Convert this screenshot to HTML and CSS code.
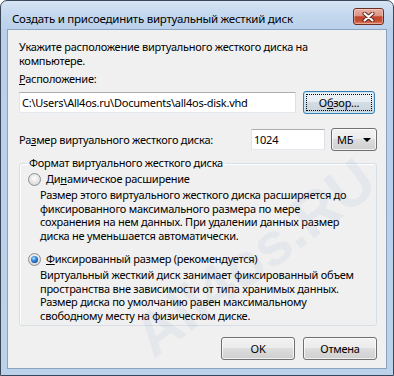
FILE: index.html
```html
<!DOCTYPE html>
<html lang="ru">
<head>
<meta charset="utf-8">
<title>Создать и присоединить виртуальный жесткий диск</title>
<link rel="stylesheet" href="styles.css">
</head>
<body>
<div class="window">
  <div class="titlebar">
    <span class="title">Создать и присоединить виртуальный жесткий диск</span>
    <div class="close">
      <svg width="13" height="10" viewBox="0 0 13 10">
        <path d="M2.5 1.5 L10.5 8.5 M10.5 1.5 L2.5 8.5" stroke="#5a2218" stroke-width="4" stroke-linecap="round" fill="none"/>
        <path d="M2.5 1.5 L10.5 8.5 M10.5 1.5 L2.5 8.5" stroke="#ffffff" stroke-width="2.2" stroke-linecap="round" fill="none"/>
      </svg>
    </div>
  </div>
  <div class="client">
    <p class="intro">Укажите расположение виртуального жесткого диска на<br>компьютере.</p>
    <div class="label"><u>Р</u>асположение:</div>
    <div class="row loc-row">
      <div class="textbox path">C:\Users\All4os.ru\Documents\all4os-disk.vhd</div>
      <div class="btn browse">О<u>б</u>зор...</div>
    </div>
    <div class="row size-row">
      <span class="size-label">Ра<u>з</u>мер виртуального жесткого диска:</span>
      <div class="textbox size">1024</div>
      <div class="btn combo"><span>МБ</span><span class="arrow"></span></div>
    </div>
    <fieldset class="group">
      <legend>Формат виртуального жесткого диска</legend>
      <div class="opt-head"><span class="radio"></span><span>Ди<u>н</u>амическое расширение</span></div>
      <p class="opt-desc">Размер этого виртуального жесткого диска расширяется до<br>фиксированного максимального размера по мере<br>сохранения на нем данных. При удалении данных размер<br>диска не уменьшается автоматически.</p>
      <div class="opt-head second"><span class="radio checked"></span><span><u>Ф</u>иксированный размер (рекомендуется)</span></div>
      <p class="opt-desc">Виртуальный жесткий диск занимает фиксированный объем<br>пространства вне зависимости от типа хранимых данных.<br>Размер диска по умолчанию равен максимальному<br>свободному месту на физическом диске.</p>
    </fieldset>
    <div class="actions">
      <div class="btn">OK</div>
      <div class="btn">Отмена</div>
    </div>
  </div>
  <div class="watermark">All4os.RU</div>
</div>
</body>
</html>
```
FILE: styles.css
```css
html, body {
  margin: 0;
  padding: 0;
  background: #ffffff;
}

.window {
  position: relative;
  width: 394px;
  height: 376px;
  box-sizing: border-box;
  border: 1px solid #3a4759;
  border-radius: 7px 7px 0 0;
  background: linear-gradient(#d6e4f4 0px, #c4d8ee 14px, #bad0ea 29px, #bcd2eb 100%);
  display: flex;
  flex-direction: column;
  overflow: hidden;
  font-family: "Noto Sans", "Open Sans", sans-serif;
  font-size: 11px;
  letter-spacing: -0.25px;
  color: #000;
}

.titlebar {
  flex: none;
  height: 28px;
  display: flex;
  align-items: flex-start;
  justify-content: space-between;
  padding: 0 9px 0 11px;
}

.title {
  margin-top: 10px;
  line-height: 15px;
  font-size: 11.5px;
  white-space: nowrap;
}

.close {
  margin-top: 7px;
  width: 31px;
  height: 17px;
  box-sizing: border-box;
  border: 1px solid #6e2b20;
  border-radius: 3px;
  background: linear-gradient(#ebb0a3 0%, #dc9382 45%, #c3442b 52%, #c64d35 78%, #e0805f 100%);
  box-shadow: inset 0 0 0 1px rgba(255, 255, 255, 0.35);
  display: flex;
  align-items: center;
  justify-content: center;
}

.client {
  flex: 1;
  margin: 0 6px 6px;
  border: 1px solid #8ca3bf;
  background: #f0f0f0;
  padding: 10px 9px 0 11px;
  display: flex;
  flex-direction: column;
}

.intro {
  margin: 0;
  line-height: 14px;
  white-space: nowrap;
}

.label {
  margin-top: 4px;
  line-height: 14px;
}

.row {
  display: flex;
  align-items: center;
  height: 23px;
}

.loc-row {
  margin-top: 5px;
}

.size-row {
  margin-top: 14px;
}

.textbox {
  box-sizing: border-box;
  height: 21px;
  background: #fff;
  border: 1px solid;
  border-color: #abadb3 #dbdfe6 #e3e9ef #e2e3ea;
  padding: 0 2px;
  line-height: 19px;
  white-space: nowrap;
  overflow: hidden;
}

.path {
  width: 277px;
}

.size {
  width: 74px;
}

.size-label {
  width: 232px;
  white-space: nowrap;
}

.btn {
  position: relative;
  box-sizing: border-box;
  height: 23px;
  border: 1px solid #707070;
  border-radius: 3px;
  background: linear-gradient(#f2f2f2 0%, #ebebeb 50%, #dddddd 50%, #cfcfcf 100%);
  box-shadow: inset 0 0 0 1px rgba(255, 255, 255, 0.7);
  display: flex;
  align-items: center;
  justify-content: center;
  line-height: 14px;
  white-space: nowrap;
}

.browse {
  width: 72px;
  margin-left: 7px;
  border-color: #3c7fb1;
  box-shadow: inset 0 0 0 1px #c4e5f6;
  background: linear-gradient(#eef3f7 0%, #e6ecf1 50%, #d5dde4 50%, #c9d2da 100%);
}

.browse::after {
  content: "";
  position: absolute;
  inset: 2px;
  border: 1px dotted #000;
}

.combo {
  width: 46px;
  margin-left: 6px;
  justify-content: space-between;
  padding: 0 5px 0 5px;
}

.arrow {
  width: 0;
  height: 0;
  border-left: 4px solid transparent;
  border-right: 4px solid transparent;
  border-top: 4px solid #000;
}

.group {
  margin: 5px 0 0;
  padding: 0 0 3px 0;
  min-width: 0;
  border: 1px solid #d5dfe5;
  border-radius: 3px;
  box-shadow: inset 1px 1px 0 #fff;
}

.group legend {
  margin-left: 7px;
  padding: 0 2px;
  line-height: 14px;
}

.opt-head {
  display: flex;
  align-items: center;
  gap: 5px;
  height: 16px;
  margin-top: 1px;
  padding-left: 8px;
  line-height: 14px;
}

.opt-head.second {
  margin-top: 9px;
}

.radio {
  position: relative;
  flex: none;
  width: 13px;
  height: 13px;
  box-sizing: border-box;
  border: 1px solid #8e8f8f;
  border-radius: 50%;
  background: radial-gradient(circle at 50% 40%, #ffffff 0%, #e6e6e6 50%, #c9c9c9 100%);
}

.radio.checked::after {
  content: "";
  position: absolute;
  left: 2px;
  top: 2px;
  width: 7px;
  height: 7px;
  border-radius: 50%;
  background: radial-gradient(circle at 40% 35%, #b9e4ff 0%, #3d8fe0 35%, #1456b0 70%, #0b3a82 100%);
}

.opt-desc {
  margin: 1px 0 0;
  padding-left: 20px;
  line-height: 13.5px;
  white-space: nowrap;
}

u {
  text-decoration: underline;
  text-decoration-thickness: 1px;
  text-underline-offset: 1px;
}

.actions {
  margin-top: 11px;
  display: flex;
  justify-content: flex-end;
  gap: 8px;
}

.actions .btn {
  width: 74px;
}

.watermark {
  position: absolute;
  left: 112px;
  top: 222px;
  font-family: "Liberation Sans", sans-serif;
  font-weight: bold;
  font-size: 60px;
  line-height: 70px;
  letter-spacing: 0;
  color: rgba(110, 145, 190, 0.09);
  transform: rotate(-37deg);
  white-space: nowrap;
  pointer-events: none;
}
```
